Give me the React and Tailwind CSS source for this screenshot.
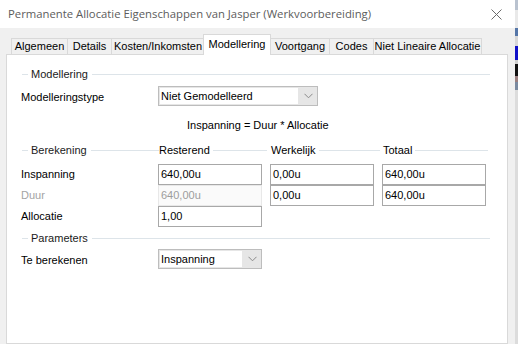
const tabs = [
  { label: 'Algemeen', w: 'w-[56px]' },
  { label: 'Details', w: 'w-[44px]' },
  { label: 'Kosten/Inkomsten', w: 'w-[93px]' },
  { label: 'Modellering', w: 'w-[68px]', active: true },
  { label: 'Voortgang', w: 'w-[59px]' },
  { label: 'Codes', w: 'w-[44px]' },
  { label: 'Niet Lineaire Allocatie', w: 'w-[109px]' },
];

function Chevron() {
  return (
    <svg width="9" height="6" viewBox="0 0 9 6" fill="none">
      <path d="M0.5 0.8 L4.5 4.8 L8.5 0.8" stroke="#8a8a8a" strokeWidth="1" />
    </svg>
  );
}

function Combo({ value, w }) {
  return (
    <div className={`${w} h-[20px] flex border border-[#bdbdbd] bg-[#e6e6e6]`}>
      <div className="flex-1 bg-white m-px flex items-center pl-[1px] text-black">{value}</div>
      <div className="w-[18px] flex items-center justify-center">
        <Chevron />
      </div>
    </div>
  );
}

function Field({ value, disabled }) {
  return (
    <div
      className={`w-[104px] h-[21px] flex items-center pl-[2px] border ${
        disabled ? 'border-[#e8e8e8] bg-[#fafafa] text-[#9d9d9d]' : 'border-[#a8a8a8] bg-white text-black'
      }`}
    >
      {value}
    </div>
  );
}

function Line() {
  return <div className="h-px bg-[#dde4e9]" />;
}

function SectionHeader({ title }) {
  return (
    <div className="h-[14px] flex items-center pl-[15px] pr-[17px]">
      <div className="w-[6px]"><Line /></div>
      <span className="ml-[3px] mr-[4px] text-[#1a1a1a]">{title}</span>
      <div className="flex-1"><Line /></div>
    </div>
  );
}

export default function App() {
  return (
    <div
      className="w-[518px] h-[344px] flex overflow-hidden text-[11px] leading-none"
      style={{ fontFamily: '"Liberation Sans", Arial, sans-serif' }}
    >
      <div className="w-[515px] flex flex-col">
        {/* title bar */}
        <div className="h-[28px] bg-white flex items-center justify-between pl-[8px] pr-[13px]">
          <span
            className="text-[11.3px] text-[#5c5c5c]"
            style={{ fontFamily: '"Open Sans", "Noto Sans", sans-serif' }}
          >
            Permanente Allocatie Eigenschappen van Jasper (Werkvoorbereiding)
          </span>
          <svg width="11" height="11" viewBox="0 0 11 11">
            <path d="M0.5 0.5 L10.5 10.5 M10.5 0.5 L0.5 10.5" stroke="#6b6b6b" strokeWidth="1" />
          </svg>
        </div>

        <div className="flex-1 bg-[#f0f0f0] flex flex-col pl-[6px] pr-[7px] pt-[6px]">
          {/* tabs */}
          <div className="h-[20px] flex items-end pl-[5px]">
            {tabs.map((t) => (
              <div
                key={t.label}
                className={
                  t.active
                    ? `${t.w} h-[21px] -mb-px relative z-10 bg-white border border-b-0 border-[#d9d9d9] flex items-start justify-center pt-[4px] text-black -mx-px`
                    : `${t.w} h-[16px] bg-[#f0f0f0] border border-b-0 border-r-0 border-[#d9d9d9] last:border-r flex items-center justify-center text-black`
                }
              >
                {t.label}
              </div>
            ))}
          </div>

          {/* page */}
          <div className="flex-1 bg-white border border-[#d9d9d9] flex flex-col pt-[12px]">
            <SectionHeader title="Modellering" />

            <div className="mt-[5px] flex items-center pl-[14px]">
              <div className="w-[137px] pt-[3px]">Modelleringstype</div>
              <Combo value="Niet Gemodelleerd" w="w-[160px]" />
            </div>

            <div className="mt-[12px] h-[14px] flex items-center pl-[180px]">
              Inspanning = Duur * Allocatie
            </div>

            {/* Berekening header */}
            <div className="mt-[11px] h-[14px] flex items-center pl-[15px]">
              <div className="w-[137px] flex items-center">
                <div className="w-[6px]"><Line /></div>
                <span className="ml-[3px] mr-[4px] text-[#1a1a1a]">Berekening</span>
                <div className="flex-1"><Line /></div>
              </div>
              <div className="w-[112px] flex items-center pr-[4px]">
                <span className="mr-[3px]">Resterend</span>
                <div className="flex-1"><Line /></div>
              </div>
              <div className="w-[112px] flex items-center pr-[3px]">
                <span className="mr-[4px]">Werkelijk</span>
                <div className="flex-1"><Line /></div>
              </div>
              <div className="w-[105px] flex items-center">
                <span className="mr-[3px]">Totaal</span>
                <div className="flex-1"><Line /></div>
              </div>
            </div>

            {/* fields */}
            <div className="mt-[7px] flex pl-[14px]">
              <div className="w-[137px] flex flex-col">
                <div className="h-[21px] flex items-center">Inspanning</div>
                <div className="h-[21px] flex items-center text-[#a3a3a3]">Duur</div>
                <div className="h-[21px] flex items-center">Allocatie</div>
              </div>
              <div className="flex flex-col">
                <Field value="640,00u" />
                <Field value="640,00u" disabled />
                <Field value="1,00" />
              </div>
              <div className="flex flex-col ml-[8px]">
                <Field value="0,00u" />
                <Field value="0,00u" />
              </div>
              <div className="flex flex-col ml-[8px]">
                <Field value="640,00u" />
                <Field value="640,00u" />
              </div>
            </div>

            <div className="mt-[4px]">
              <SectionHeader title="Parameters" />
            </div>

            <div className="mt-[4px] flex items-center pl-[14px]">
              <div className="w-[137px] pt-[2px]">Te berekenen</div>
              <Combo value="Inspanning" w="w-[104px]" />
            </div>
          </div>
        </div>
      </div>

      {/* desktop strip behind the dialog */}
      <div className="w-[3px] flex flex-col bg-[#d6d6d6]">
        <div className="h-[10px] bg-[#b9c2cf]" />
        <div className="h-[18px] bg-[#e9e9e9]" />
        <div className="h-[8px] bg-[#5576a8]" />
        <div className="h-[10px] bg-[#d7d7d7]" />
        <div className="h-[14px] bg-[#1010c8]" />
        <div className="h-[4px] bg-[#cfcfcf]" />
        <div className="h-[12px] bg-[#101010]" />
        <div className="h-[6px] bg-[#9a7f7f]" />
        <div className="h-[8px] bg-[#7a8aa0]" />
        <div className="flex-1 bg-[#dcdcdc]" />
      </div>
    </div>
  );
}
